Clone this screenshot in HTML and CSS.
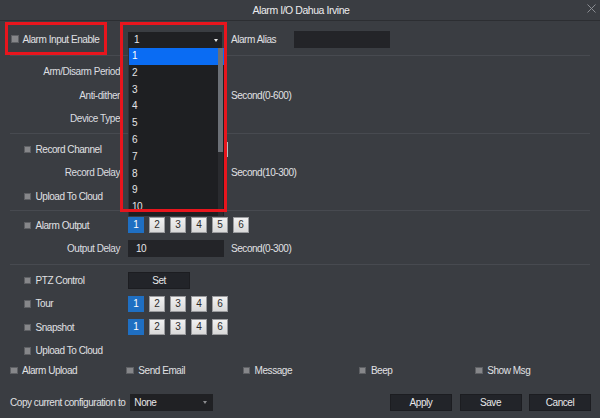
FILE: index.html
```html
<!DOCTYPE html>
<html lang="en">
<head>
<meta charset="utf-8">
<title>Alarm I/O</title>
<link rel="stylesheet" href="styles.css">
</head>
<body>
<div class="dialog">
  <header class="titlebar">
    <span></span>
    <h1 class="title">Alarm I/O Dahua Irvine</h1>
    <button class="close" aria-label="Close"><svg width="9" height="9" viewBox="0 0 9 9"><path d="M0.5 0.5L8.5 8.5M8.5 0.5L0.5 8.5" stroke="#8a8d92" stroke-width="1" fill="none"/></svg></button>
  </header>

  <div class="top-row">
    <label class="enable"><span class="cb"></span>Alarm Input Enable</label>
    <div class="select-wrap">
      <div class="select"><span>1</span><i class="caret"></i></div>
      <div class="dropdown">
        <ul class="options">
          <li class="active">1</li>
          <li>2</li>
          <li>3</li>
          <li>4</li>
          <li>5</li>
          <li>6</li>
          <li>7</li>
          <li>8</li>
          <li>9</li>
          <li>10</li>
        </ul>
        <div class="scroll"><div class="thumb"></div></div>
      </div>
      <div class="mark-box"></div>
    </div>
    <span class="alias-label">Alarm Alias</span>
    <div class="input alias"></div>
  </div>

  <section class="sec sec-a">
    <div class="row"><span class="lbl">Arm/Disarm Period</span><div class="btn-dark ctrl">Setting</div></div>
    <div class="row"><span class="lbl">Anti-dither</span><div class="input ctrl">0</div><span class="unit">Second(0-600)</span></div>
    <div class="row"><span class="lbl">Device Type</span><div class="input ctrl">NO</div></div>
  </section>

  <section class="sec sec-b">
    <div class="row"><label class="chk"><span class="cb"></span>Record Channel</label><div class="chan"></div></div>
    <div class="row"><span class="lbl">Record Delay</span><div class="input ctrl">10</div><span class="unit">Second(10-300)</span></div>
    <div class="row"><label class="chk"><span class="cb"></span>Upload To Cloud</label></div>
  </section>

  <section class="sec sec-c">
    <div class="row"><label class="chk"><span class="cb"></span>Alarm Output</label>
      <div class="nums"><span class="num on">1</span><span class="num">2</span><span class="num">3</span><span class="num">4</span><span class="num">5</span><span class="num">6</span></div>
    </div>
    <div class="row"><span class="lbl">Output Delay</span><div class="input ctrl">10</div><span class="unit">Second(0-300)</span></div>
  </section>

  <section class="sec sec-d">
    <div class="row"><label class="chk"><span class="cb"></span>PTZ Control</label><div class="btn-dark set">Set</div></div>
    <div class="row"><label class="chk"><span class="cb"></span>Tour</label>
      <div class="nums"><span class="num on">1</span><span class="num">2</span><span class="num">3</span><span class="num">4</span><span class="num">6</span></div>
    </div>
    <div class="row"><label class="chk"><span class="cb"></span>Snapshot</label>
      <div class="nums"><span class="num on">1</span><span class="num">2</span><span class="num">3</span><span class="num">4</span><span class="num">6</span></div>
    </div>
    <div class="row"><label class="chk"><span class="cb"></span>Upload To Cloud</label></div>
  </section>

  <div class="notify">
    <label class="chk"><span class="cb"></span>Alarm Upload</label>
    <label class="chk"><span class="cb"></span>Send Email</label>
    <label class="chk"><span class="cb"></span>Message</label>
    <label class="chk"><span class="cb"></span>Beep</label>
    <label class="chk"><span class="cb"></span>Show Msg</label>
  </div>

  <footer class="footer">
    <span class="copy-label">Copy current configuration to</span>
    <div class="select small"><span>None</span><i class="caret grey"></i></div>
    <div class="actions">
      <button class="btn-dark act">Apply</button>
      <button class="btn-dark act">Save</button>
      <button class="btn-dark act">Cancel</button>
    </div>
  </footer>
</div>
</body>
</html>
```

FILE: styles.css
```css
* { box-sizing: border-box; }
html, body { margin: 0; padding: 0; }
body {
  width: 600px;
  height: 418px;
  background: #3a3d42;
  font-family: "Liberation Sans", Arial, sans-serif;
  font-size: 10px;
  letter-spacing: -0.45px;
  color: #e0e1e4;
  overflow: hidden;
}
.dialog { width: 600px; height: 418px; }

.titlebar {
  height: 21px;
  border-bottom: 1px solid #2c2e32;
  display: grid;
  grid-template-columns: 1fr auto 1fr;
  align-items: center;
}
.title {
  margin: 0;
  font-size: 10.5px;
  font-weight: normal;
  color: #ececee;
  line-height: 18px;
  padding-left: 2px;
}
.close {
  justify-self: end;
  margin-right: 4px;
  background: none;
  border: 0;
  padding: 0;
  width: 9px;
  height: 9px;
  margin-top: -3px;
  display: flex;
}

.top-row {
  margin-top: 1px;
  height: 33px;
  display: flex;
  align-items: center;
}
.enable {
  margin-left: 5px;
  width: 102px;
  height: 33px;
  border: 3px solid #e8151d;
  padding-left: 3px;
  display: flex;
  align-items: center;
  gap: 4px;
  padding-top: 1px;
}
.cb {
  display: inline-block;
  width: 7.5px;
  height: 7.5px;
  background: #86878a;
  border: 1px solid #5e6064;
  flex: none;
}
.select-wrap {
  position: relative;
  margin-left: 21px;
  margin-top: 3px;
  width: 94px;
  height: 16px;
}
.select {
  position: relative;
  height: 16px;
  background: #1f2023;
  padding-left: 6px;
  line-height: 16px;
  color: #e6e6e8;
}
.caret {
  position: absolute;
  right: 4px;
  top: 7px;
  width: 0;
  height: 0;
  border-left: 2.5px solid transparent;
  border-right: 2.5px solid transparent;
  border-top: 3px solid #e6e6e6;
}
.caret.grey { border-top-color: #8c8d90; right: 6px; }

.dropdown {
  position: absolute;
  left: 0;
  top: 16px;
  width: 96px;
  height: 168px;
  background: #1e1f22;
  border-left: 1px solid #2e3034;
  overflow: hidden;
  z-index: 10;
}
.options { list-style: none; margin: 0; padding: 0; }
.options li {
  height: 16.8px;
  line-height: 16.8px;
  padding-left: 3px;
  color: #e4e4e6;
}
.options li.active { background: #0a6cf3; color: #ffffff; }
.scroll {
  position: absolute;
  right: 1px;
  top: 0;
  width: 5px;
  height: 100%;
  background: #2a2b2f;
}
.thumb { height: 104px; background: #6c7077; }
.mark-box {
  position: absolute;
  left: -8px;
  top: -10px;
  width: 107px;
  height: 190px;
  border: 3px solid #e8151d;
  z-index: 11;
  pointer-events: none;
}
.alias-label { margin-left: 9px; width: 63px; margin-top: 1px; }
.input {
  height: 17px;
  background: #232428;
  line-height: 17px;
  padding-left: 8px;
  color: #e6e6e8;
}
.alias { width: 96px; margin-top: 1px; }

.sec {
  margin: 0 10px;
  border-top: 1px solid #474a50;
}
.sec-a { padding: 4px 0 2px; }
.sec-b { padding: 4px 0 1.5px; }
.sec-c { padding: 3px 0 3px; }
.sec-d { padding: 4px 0 0; }
.row {
  height: 23.5px;
  display: grid;
  grid-template-columns: 118px 103px 1fr;
  align-items: center;
}
.lbl { text-align: right; padding-right: 8px; color: #dcdde0; }
.ctrl { width: 96px; }
.btn-dark {
  background: #222429;
  border: 1px solid #1c1d21;
  color: #e8e8ea;
  text-align: center;
  font-family: inherit;
  font-size: 10px;
  letter-spacing: -0.45px;
  padding: 0;
}
.ctrl.btn-dark { height: 17px; line-height: 15px; }
.chk {
  display: flex;
  align-items: center;
  gap: 4.5px;
  white-space: nowrap;
}
.row .chk { padding-left: 13.5px; }
.chan {
  width: 100px;
  height: 15px;
  border-right: 1.5px solid #b8bbc0;
  background: #1f2023;
}
.nums { display: flex; gap: 5px; grid-column: 2 / -1; }
.num {
  width: 16px;
  height: 16px;
  border: 1px solid #9a9b9e;
  background: linear-gradient(#f1f1f1, #d9d9d9);
  color: #2a2a2a;
  text-align: center;
  line-height: 14px;
  letter-spacing: 0;
}
.num.on {
  background: #1f6fc2;
  border-color: #1f6fc2;
  color: #ffffff;
}
.set { width: 62px; height: 17px; line-height: 15px; }
.unit { color: #e0e1e4; }

.notify {
  display: grid;
  grid-template-columns: repeat(5, 116.3px);
  padding-left: 10px;
  height: 16px;
  align-items: center;
}

.footer {
  margin-top: 15px;
  height: 17px;
  display: flex;
  align-items: center;
  padding: 0 9px 0 10px;
}
.select.small {
  margin-left: 5px;
  width: 83px;
  height: 17px;
  line-height: 17px;
  background: #202124;
  padding-left: 4px;
}
.select.small .caret { top: 7px; }
.actions { margin-left: auto; display: flex; gap: 7.5px; }
.act { width: 62px; height: 17px; line-height: 15px; }
```
